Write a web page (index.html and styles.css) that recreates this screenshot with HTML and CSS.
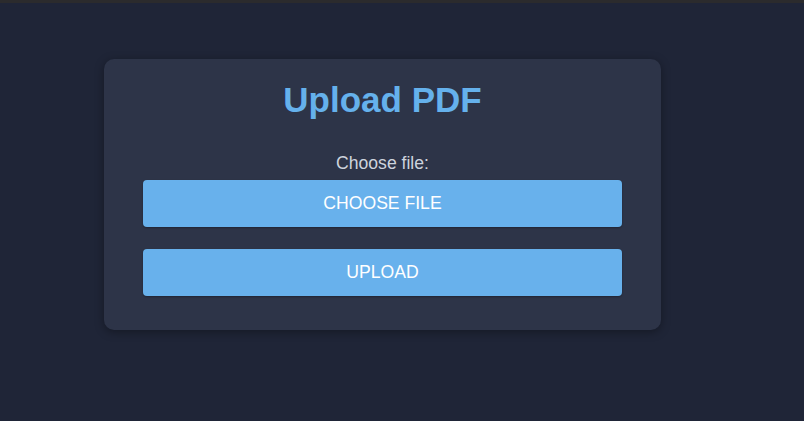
FILE: index.html
```html
<!DOCTYPE html>
<html lang="en">
<head>
<meta charset="utf-8">
<title>Upload PDF</title>
<link rel="stylesheet" href="styles.css">
</head>
<body>
<div class="topbar"></div>
<main class="page">
  <section class="card">
    <h1 class="title">Upload PDF</h1>
    <form class="form">
      <label class="label">Choose file:</label>
      <button type="button" class="btn">CHOOSE FILE</button>
      <button type="button" class="btn btn-upload">UPLOAD</button>
    </form>
  </section>
</main>
</body>
</html>
```
FILE: styles.css
```css
html, body {
  margin: 0;
  padding: 0;
  height: 100%;
}
body {
  background: #1f2537;
  font-family: "Liberation Sans", Arial, sans-serif;
  overflow: hidden;
}
.topbar {
  height: 3px;
  background: #2b2b2d;
}
.page {
  padding: 56px 0 0 104px;
}
.card {
  width: 557px;
  box-sizing: border-box;
  background: #2d3448;
  border-radius: 10px;
  box-shadow: 0 2px 10px rgba(0, 0, 0, 0.35);
  padding: 22px 39px 34px;
}
.title {
  margin: 0;
  text-align: center;
  font-size: 35px;
  font-weight: bold;
  color: #65b1ec;
  line-height: 37px;
}
.form {
  display: flex;
  flex-direction: column;
  margin-top: 36px;
}
.label {
  text-align: center;
  color: #cdd3dd;
  font-size: 17.6px;
  line-height: 19px;
  margin-bottom: 7px;
}
.btn {
  height: 47px;
  border: none;
  border-radius: 4px;
  background: #68b1ec;
  color: #ffffff;
  font-family: "Liberation Sans", Arial, sans-serif;
  font-size: 17.6px;
  padding: 0;
  box-shadow: 0 1px 2px rgba(0, 0, 0, 0.3);
}
.btn-upload {
  margin-top: 22px;
}
```
